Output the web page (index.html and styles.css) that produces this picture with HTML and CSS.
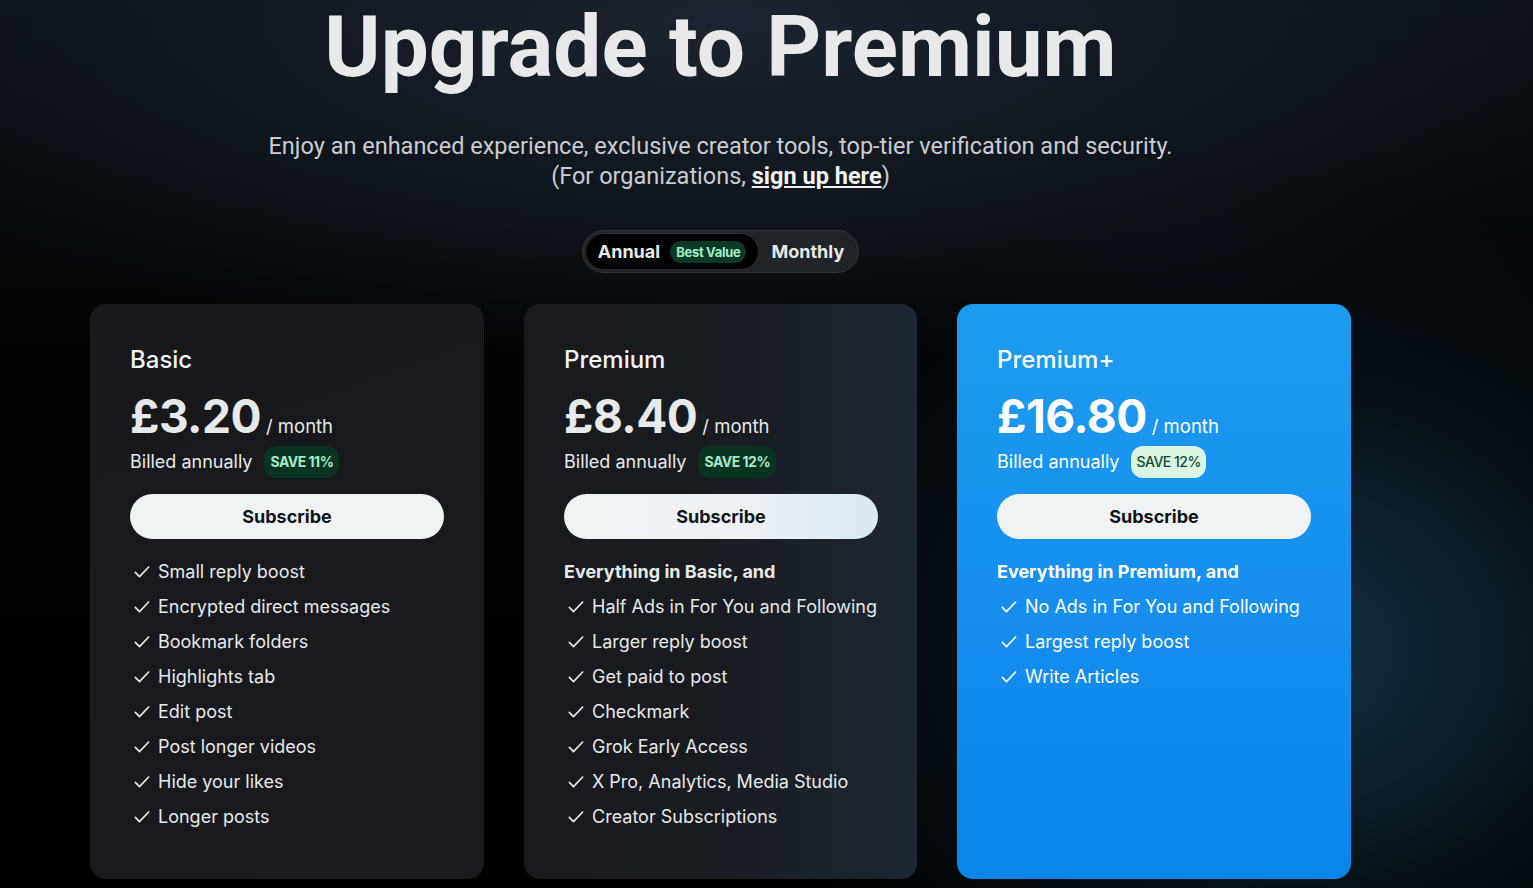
FILE: index.html
```html
<!DOCTYPE html>
<html lang="en">
<head>
<meta charset="utf-8">
<title>Upgrade to Premium</title>
<link rel="stylesheet" href="styles.css">
</head>
<body>
<main class="page">
  <h1 class="title">Upgrade to Premium</h1>
  <p class="subtitle">Enjoy an enhanced experience, exclusive creator tools, top-tier verification and security.<br>(For organizations, <a href="#" class="link">sign up here</a>)</p>

  <div class="toggle-wrap">
    <div class="toggle">
      <div class="seg seg-active">Annual <span class="best">Best Value</span></div>
      <div class="seg">Monthly</div>
    </div>
  </div>

  <section class="cards">
    <article class="card card-basic">
      <h2 class="plan">Basic</h2>
      <div class="price-row"><span class="price">£3.20</span><span class="per">/ month</span></div>
      <div class="billed">Billed annually <span class="save">SAVE 11%</span></div>
      <button class="sub">Subscribe</button>
      <ul class="feats">
        <li><svg class="chk" viewBox="0 0 24 24"><path d="M4 12.5l5 5L20 6"/></svg>Small reply boost</li>
        <li><svg class="chk" viewBox="0 0 24 24"><path d="M4 12.5l5 5L20 6"/></svg>Encrypted direct messages</li>
        <li><svg class="chk" viewBox="0 0 24 24"><path d="M4 12.5l5 5L20 6"/></svg>Bookmark folders</li>
        <li><svg class="chk" viewBox="0 0 24 24"><path d="M4 12.5l5 5L20 6"/></svg>Highlights tab</li>
        <li><svg class="chk" viewBox="0 0 24 24"><path d="M4 12.5l5 5L20 6"/></svg>Edit post</li>
        <li><svg class="chk" viewBox="0 0 24 24"><path d="M4 12.5l5 5L20 6"/></svg>Post longer videos</li>
        <li><svg class="chk" viewBox="0 0 24 24"><path d="M4 12.5l5 5L20 6"/></svg>Hide your likes</li>
        <li><svg class="chk" viewBox="0 0 24 24"><path d="M4 12.5l5 5L20 6"/></svg>Longer posts</li>
      </ul>
    </article>

    <article class="card card-premium">
      <h2 class="plan">Premium</h2>
      <div class="price-row"><span class="price">£8.40</span><span class="per">/ month</span></div>
      <div class="billed">Billed annually <span class="save">SAVE 12%</span></div>
      <button class="sub sub-grad">Subscribe</button>
      <ul class="feats">
        <li class="head">Everything in Basic, and</li>
        <li><svg class="chk" viewBox="0 0 24 24"><path d="M4 12.5l5 5L20 6"/></svg>Half Ads in For You and Following</li>
        <li><svg class="chk" viewBox="0 0 24 24"><path d="M4 12.5l5 5L20 6"/></svg>Larger reply boost</li>
        <li><svg class="chk" viewBox="0 0 24 24"><path d="M4 12.5l5 5L20 6"/></svg>Get paid to post</li>
        <li><svg class="chk" viewBox="0 0 24 24"><path d="M4 12.5l5 5L20 6"/></svg>Checkmark</li>
        <li><svg class="chk" viewBox="0 0 24 24"><path d="M4 12.5l5 5L20 6"/></svg>Grok Early Access</li>
        <li><svg class="chk" viewBox="0 0 24 24"><path d="M4 12.5l5 5L20 6"/></svg>X Pro, Analytics, Media Studio</li>
        <li><svg class="chk" viewBox="0 0 24 24"><path d="M4 12.5l5 5L20 6"/></svg>Creator Subscriptions</li>
      </ul>
    </article>

    <article class="card card-plus">
      <h2 class="plan">Premium+</h2>
      <div class="price-row"><span class="price">£16.80</span><span class="per">/ month</span></div>
      <div class="billed">Billed annually <span class="save save-light">SAVE 12%</span></div>
      <button class="sub">Subscribe</button>
      <ul class="feats">
        <li class="head">Everything in Premium, and</li>
        <li><svg class="chk" viewBox="0 0 24 24"><path d="M4 12.5l5 5L20 6"/></svg>No Ads in For You and Following</li>
        <li><svg class="chk" viewBox="0 0 24 24"><path d="M4 12.5l5 5L20 6"/></svg>Largest reply boost</li>
        <li><svg class="chk" viewBox="0 0 24 24"><path d="M4 12.5l5 5L20 6"/></svg>Write Articles</li>
      </ul>
    </article>
  </section>
</main>
</body>
</html>
```

FILE: styles.css
```css
* { box-sizing: border-box; }
html, body { margin: 0; padding: 0; }
body {
  width: 1533px;
  height: 888px;
  overflow: hidden;
  color: #e7e9ea;
  font-family: "Inter", "Liberation Sans", sans-serif;
  background:
    radial-gradient(ellipse 560px 460px at 1285px 650px, rgba(24, 56, 78, 0.9), rgba(12, 30, 42, 0.5) 55%, rgba(0,0,0,0) 100%),
    radial-gradient(ellipse 950px 340px at 720px 20px, #1b2430 0%, #111820 45%, rgba(0,0,0,0) 100%),
    linear-gradient(180deg, #0b1016 0%, #020304 40%, #000 100%);
}
.page {
  width: 1261px;
  margin-left: 90px;
  display: flex;
  flex-direction: column;
  align-items: center;
}
.title {
  margin: -3px 0 0;
  font-family: "Roboto", "Liberation Sans", sans-serif;
  font-weight: 700;
  font-size: 85.5px;
  line-height: 100px;
  letter-spacing: 0;
  color: #e7e9ea;
}
.subtitle {
  margin: 34px 0 0;
  text-align: center;
  font-family: "Roboto", "Liberation Sans", sans-serif;
  font-size: 23.5px;
  line-height: 30px;
  color: #c9cdd1;
}
.link {
  color: #f1f3f4;
  font-weight: 700;
  text-decoration: underline;
}
.toggle-wrap {
  margin-top: 39px;
  display: flex;
  justify-content: center;
}
.toggle {
  display: flex;
  align-items: center;
  height: 43px;
  padding: 2px;
  border-radius: 22px;
  background: #202327;
  border: 1px solid #2f3336;
}
.seg {
  display: flex;
  align-items: center;
  height: 37px;
  padding: 0 12px;
  font-weight: 700;
  font-size: 18px;
  color: #e7e9ea;
  border-radius: 19px;
}
.seg-active {
  background: #000;
  border: 1px solid #2a2e32;
}
.best {
  margin-left: 10px;
  padding: 3px 6px;
  border-radius: 12px;
  background: #0b3b27;
  color: #a5ecc4;
  font-size: 13px;
  font-weight: 700;
  letter-spacing: -0.3px;
}
.cards {
  margin-top: 31px;
  width: 100%;
  display: grid;
  grid-template-columns: 394px 393px 394px;
  column-gap: 40px;
}
.card {
  height: 575px;
  border-radius: 16px;
  padding: 41px 40px 0;
}
.card-basic {
  background: linear-gradient(160deg, #16181c 0%, #181a1e 100%);
}
.card-premium {
  background: linear-gradient(90deg, #17191d 0%, #181b20 45%, #1d2731 100%);
}
.card-plus {
  background: linear-gradient(180deg, #1d9bf0 0%, #168fee 50%, #0a85ea 100%);
  color: #fff;
}
.plan {
  margin: 0;
  font-weight: 500;
  font-size: 24px;
  line-height: 30px;
  color: #f1f3f4;
}
.card-plus .plan { color: #fff; }
.price-row {
  margin-top: 13px;
  display: flex;
  align-items: baseline;
}
.price {
  font-weight: 700;
  font-size: 46px;
  line-height: 56px;
  letter-spacing: -0.5px;
}
.per {
  margin-left: 5px;
  font-size: 18.5px;
}
.billed {
  margin-top: 2px;
  display: flex;
  align-items: center;
  font-size: 18px;
  line-height: 26px;
}
.save {
  margin-left: 12px;
  padding: 3px 6px;
  border-radius: 12px;
  background: #0a3322;
  color: #a5ecc4;
  font-size: 14px;
  font-weight: 700;
  letter-spacing: -0.5px;
}
.save-light {
  background: #d9f7e4;
  color: #0b4a2c;
  font-weight: 500;
  font-size: 14px;
  padding: 3px 5px;
}
.sub {
  display: block;
  margin-top: 16px;
  width: 314px;
  height: 45px;
  border: none;
  border-radius: 23px;
  background: #eff3f4;
  color: #0f1419;
  font-family: "Inter", "Liberation Sans", sans-serif;
  font-size: 18px;
  font-weight: 700;
}
.sub-grad {
  background: linear-gradient(90deg, #eff3f4 0%, #eef2f4 55%, #dbe9f4 100%);
}
.feats {
  list-style: none;
  margin: 15px 0 0;
  padding: 0;
}
.feats li {
  display: flex;
  align-items: center;
  height: 35px;
  font-size: 18px;
  white-space: nowrap;
  color: #e7e9ea;
}
.card-plus .feats li { color: #fff; }
.feats li.head {
  font-weight: 700;
}
.chk {
  flex: none;
  width: 20px;
  height: 20px;
  margin: 0 6px 0 2px;
  fill: none;
  stroke: currentColor;
  stroke-width: 2;
  stroke-linecap: round;
  stroke-linejoin: round;
}
```
